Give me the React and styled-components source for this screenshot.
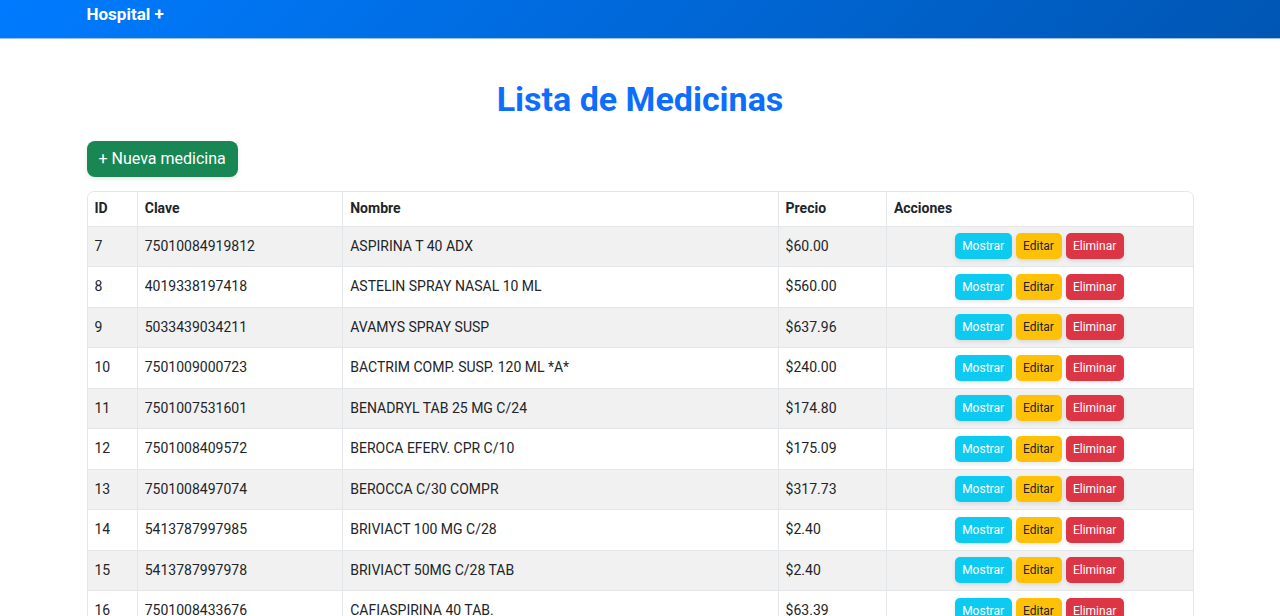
import React from "react";
import styled, { createGlobalStyle } from "styled-components";

const GlobalStyle = createGlobalStyle`
  *, *::before, *::after { box-sizing: border-box; }
  body {
    margin: 0;
    background: #fff;
    color: #212529;
    font-family: Roboto, "Liberation Sans", sans-serif;
    font-size: 14px;
    line-height: 21px;
  }
  html { scrollbar-width: none; }
`;

const Container = styled.div`
  width: 100%;
  max-width: 1131px;
  margin: 0 auto;
  padding: 0 12px;
`;

const Navbar = styled.nav`
  padding: 2px 0 12px;
  background: linear-gradient(135deg, #007bff, #0056b3);
  box-shadow: 0 1px 0 rgba(0, 98, 204, 0.4);
`;

const Brand = styled.a`
  display: block;
  width: fit-content;
  color: #fff;
  font-size: 17px;
  font-weight: 700;
  line-height: 24px;
  text-decoration: none;
`;

const Title = styled.h1`
  margin: 40px 0 20px;
  color: #0d6efd;
  font-size: 34px;
  font-weight: 700;
  line-height: 43px;
  text-align: center;
`;

const Button = styled.button`
  border: 0;
  border-radius: ${(p) => (p.$large ? 8 : 5)}px;
  padding: ${(p) => (p.$large ? "6px 12px" : "4px 8px 4px 7px")};
  background: ${(p) => p.$bg};
  color: ${(p) => p.$color || "#fff"};
  font-family: inherit;
  font-size: ${(p) => (p.$large ? 16 : 12)}px;
  line-height: ${(p) => (p.$large ? 24 : 18)}px;
  box-shadow: 0 2px 4px rgba(0, 0, 0, 0.1);
  cursor: pointer;
`;

const TableFrame = styled.div`
  margin-top: 14px;
  border: 1px solid #e4e7ea;
  border-radius: 7px;
  overflow: hidden;
`;

const Table = styled.table`
  width: 100%;
  table-layout: fixed;
  border-collapse: collapse;
`;

const Col = styled.col`
  width: ${(p) => p.$width};
`;

const HeadCell = styled.th`
  height: 34px;
  padding: 0 7px;
  text-align: left;
  font-weight: 700;
  & + & { border-left: 1px solid #e4e7ea; }
`;

const Cell = styled.td`
  height: 40px;
  padding: 0 7px;
  & + & { border-left: 1px solid #e4e7ea; }
`;

const Row = styled.tr`
  border-top: 1px solid #e4e7ea;
  &:nth-child(odd) { background: #f1f1f1; }
  &:nth-child(even) > ${Cell} { height: 41px; }
`;

const Actions = styled.div`
  display: flex;
  justify-content: center;
  gap: 4px;
`;

const medicines = [
  ["7", "75010084919812", "ASPIRINA T 40 ADX", "$60.00"],
  ["8", "4019338197418", "ASTELIN SPRAY NASAL 10 ML", "$560.00"],
  ["9", "5033439034211", "AVAMYS SPRAY SUSP", "$637.96"],
  ["10", "7501009000723", "BACTRIM COMP. SUSP. 120 ML *A*", "$240.00"],
  ["11", "7501007531601", "BENADRYL TAB 25 MG C/24", "$174.80"],
  ["12", "7501008409572", "BEROCA EFERV. CPR C/10", "$175.09"],
  ["13", "7501008497074", "BEROCCA C/30 COMPR", "$317.73"],
  ["14", "5413787997985", "BRIVIACT 100 MG C/28", "$2.40"],
  ["15", "5413787997978", "BRIVIACT 50MG C/28 TAB", "$2.40"],
  ["16", "7501008433676", "CAFIASPIRINA 40 TAB.", "$63.39"],
];

export default function App() {
  return (
    <>
      <GlobalStyle />
      <Navbar>
        <Container>
          <Brand href="#">Hospital +</Brand>
        </Container>
      </Navbar>
      <Container as="main">
        <Title>Lista de Medicinas</Title>
        <Button type="button" $large $bg="#198754">+ Nueva medicina</Button>
        <TableFrame>
          <Table>
            <colgroup>
              <Col $width="4.5%" />
              <Col $width="18.6%" />
              <Col $width="39.4%" />
              <Col $width="9.8%" />
              <Col />
            </colgroup>
            <thead>
              <tr>
                {["ID", "Clave", "Nombre", "Precio", "Acciones"].map((h) => (
                  <HeadCell key={h} scope="col">{h}</HeadCell>
                ))}
              </tr>
            </thead>
            <tbody>
              {medicines.map((m) => (
                <Row key={m[0]}>
                  {m.map((value, i) => (
                    <Cell key={i}>{value}</Cell>
                  ))}
                  <Cell>
                    <Actions>
                      <Button type="button" $bg="#0dcaf0">Mostrar</Button>
                      <Button type="button" $bg="#ffc107" $color="#212529">Editar</Button>
                      <Button type="button" $bg="#dc3545">Eliminar</Button>
                    </Actions>
                  </Cell>
                </Row>
              ))}
            </tbody>
          </Table>
        </TableFrame>
      </Container>
    </>
  );
}
